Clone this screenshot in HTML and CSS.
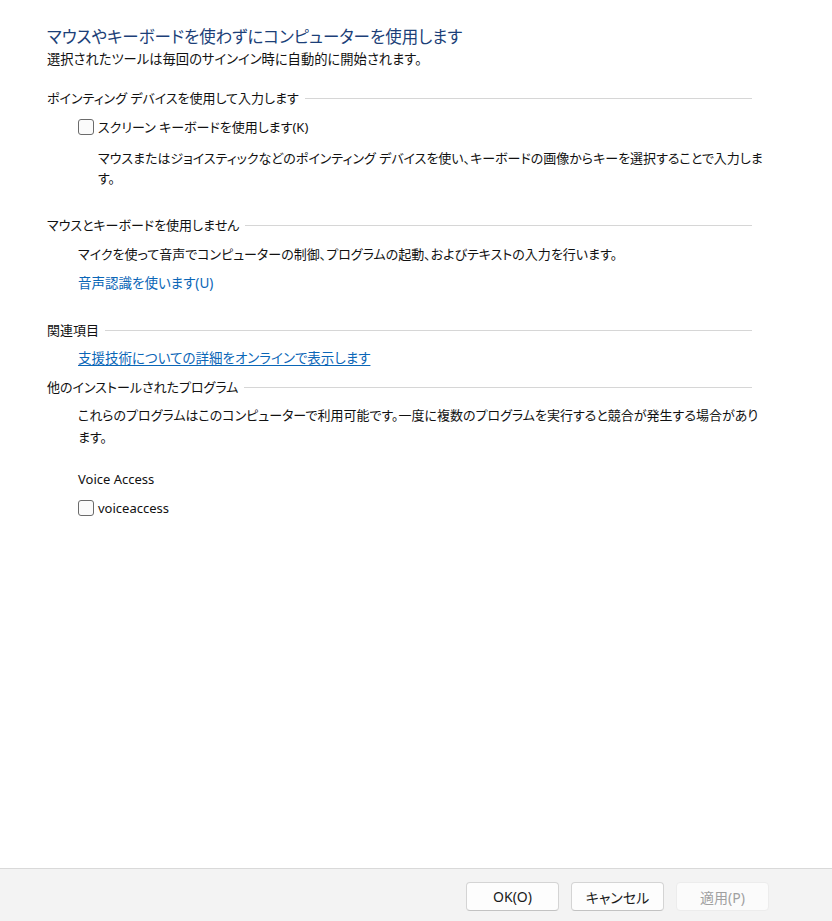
FILE: index.html
```html
<!DOCTYPE html>
<html lang="ja">
<head>
<meta charset="utf-8">
<link rel="stylesheet" href="styles.css">
</head>
<body>
<div class="window">
  <main class="content">
    <h1 class="title">マウスやキーボードを使わずにコンピューターを使用します</h1>
    <p class="subtitle">選択されたツールは毎回のサインイン時に自動的に開始されます。</p>

    <h2 class="section-head s1">ポインティング デバイスを使用して入力します</h2>
    <label class="check-row r1"><span class="box"></span><span>スクリーン キーボードを使用します(K)</span></label>
    <p class="desc">マウスまたはジョイスティックなどのポインティング デバイスを使い、キーボードの画像からキーを選択することで入力します。</p>

    <h2 class="section-head s2">マウスとキーボードを使用しません</h2>
    <p class="text t2">マイクを使って音声でコンピューターの制御、プログラムの起動、およびテキストの入力を行います。</p>
    <a class="link l2">音声認識を使います(U)</a>

    <h2 class="section-head s3">関連項目</h2>
    <a class="link underline l3">支援技術についての詳細をオンラインで表示します</a>

    <h2 class="section-head s4">他のインストールされたプログラム</h2>
    <p class="text t4">これらのプログラムはこのコンピューターで利用可能です。一度に複数のプログラムを実行すると競合が発生する場合があります。</p>
    <p class="text va">Voice Access</p>
    <label class="check-row r2"><span class="box"></span><span>voiceaccess</span></label>
  </main>
  <footer class="footer">
    <button class="btn">OK(O)</button>
    <button class="btn">キャンセル</button>
    <button class="btn disabled">適用(P)</button>
  </footer>
</div>
</body>
</html>
```
FILE: styles.css
```css
* { box-sizing: border-box; }
html, body { margin: 0; padding: 0; background: #ffffff; }
body {
  font-family: "Noto Sans", "Noto Sans CJK JP", sans-serif;
  font-feature-settings: "palt";
  color: #111111;
  font-size: 13px;
}
.window { width: 832px; height: 921px; display: flex; flex-direction: column; }
.content { flex: 1; padding: 25px 0 0 47px; }
.title {
  margin: 0; font-weight: 400; font-size: 16.5px; line-height: 24px;
  color: #1c3f78;
}
.subtitle { margin: 0; line-height: 20px; font-size: 13.3px; }
.section-head {
  display: flex; align-items: center; width: 705px;
  margin: 0; font-size: 13px; font-weight: 400; line-height: 20px;
}
.section-head::after {
  content: ""; flex: 1; height: 1px; background: #d6d6d6; margin-left: 6px;
}
.s1 { margin-top: 19px; }
.s2 { margin-top: 27px; }
.s3 { margin-top: 27px; }
.s4 { margin-top: 9px; }
.check-row {
  display: flex; align-items: center; gap: 4px; line-height: 20px;
  margin-left: 31px;
}
.r1 { margin-top: 9px; }
.r2 { margin-top: 9px; }
.box {
  width: 16px; height: 16px; border: 1px solid #6b6b6b; border-radius: 3px;
  background: #fbfbfb; flex: none;
}
.desc { margin: 11px 0 0 51px; width: 670px; line-height: 20px; }
.text { margin: 0 0 0 31px; line-height: 20px; }
.t2 { margin-top: 9px; }
.t4 { margin-top: 7px; width: 690px; line-height: 22px; }
.va { margin-top: 21px; }
.link {
  display: block; margin-left: 31px; line-height: 20px; color: #0a66b7;
  width: max-content; font-size: 13.5px;
}
.l2 { margin-top: 9px; }
.l3 { margin-top: 8px; }
.underline { text-decoration: underline; text-underline-offset: 2px; }
.footer {
  height: 53px; background: #f3f3f3; border-top: 1px solid #d9d9d9;
  display: flex; justify-content: flex-end; align-items: flex-start;
  gap: 12px; padding: 13px 63px 0 0;
}
.btn {
  width: 93px; height: 29px; font: inherit; font-size: 14px; color: #1a1a1a;
  background: #fdfdfd; border: 1px solid #d4d4d4; border-bottom-color: #c2c2c2;
  border-radius: 4px; padding: 0;
}
.btn.disabled { background: #fbfbfb; border-color: #ececec; color: #a0a0a0; }
```
